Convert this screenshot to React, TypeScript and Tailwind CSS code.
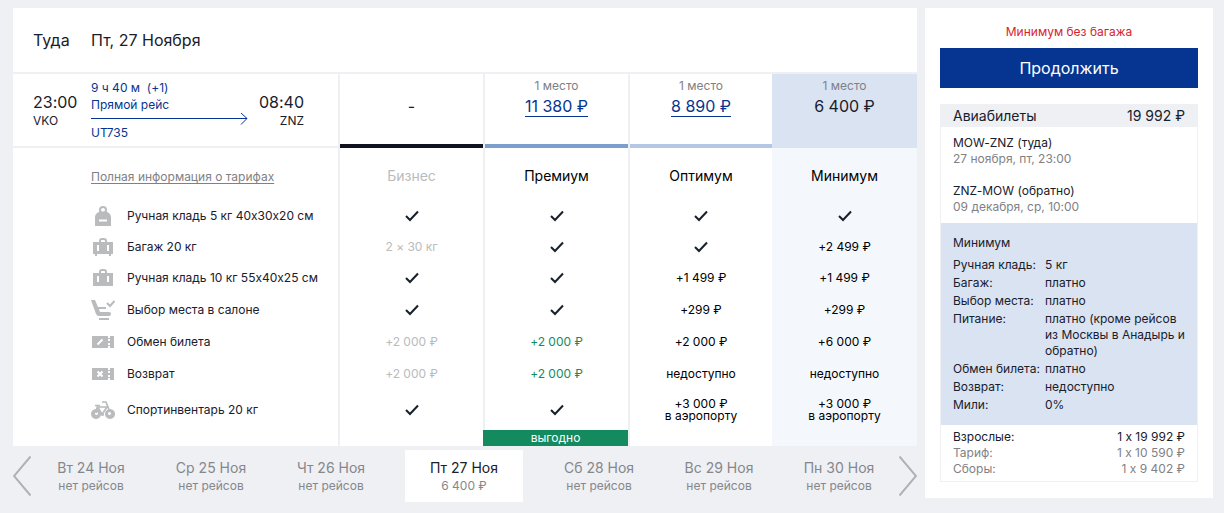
import clsx from "clsx";
import type { ReactNode } from "react";

type Cell = { text: string; tone?: "muted" | "good" } | "check";

const CHECK: Cell = "check";

const tariffs = [
  { name: "Бизнес", seats: "", price: "", bar: "border-[#10131f]" },
  { name: "Премиум", seats: "1 место", price: "11 380 ₽", bar: "border-[#7c9fcd]" },
  { name: "Оптимум", seats: "1 место", price: "8 890 ₽", bar: "border-[#b4c7e5]" },
  { name: "Минимум", seats: "1 место", price: "6 400 ₽", bar: "border-[#dae3f2]", selected: true },
];

const rows: { label: string; icon: ReactNode; height: string; cells: Cell[] }[] = [
  {
    label: "Ручная кладь 5 кг 40x30x20 см",
    icon: <BackpackIcon />,
    height: "h-[31px]",
    cells: [CHECK, CHECK, CHECK, CHECK],
  },
  {
    label: "Багаж 20 кг",
    icon: <SuitcaseIcon feet />,
    height: "h-[31px]",
    cells: [{ text: "2 × 30 кг", tone: "muted" }, CHECK, CHECK, { text: "+2 499 ₽" }],
  },
  {
    label: "Ручная кладь 10 кг 55x40x25 см",
    icon: <SuitcaseIcon />,
    height: "h-8",
    cells: [CHECK, CHECK, { text: "+1 499 ₽" }, { text: "+1 499 ₽" }],
  },
  {
    label: "Выбор места в салоне",
    icon: <SeatIcon />,
    height: "h-8",
    cells: [CHECK, CHECK, { text: "+299 ₽" }, { text: "+299 ₽" }],
  },
  {
    label: "Обмен билета",
    icon: <TicketIcon mark="edit" />,
    height: "h-8",
    cells: [
      { text: "+2 000 ₽", tone: "muted" },
      { text: "+2 000 ₽", tone: "good" },
      { text: "+2 000 ₽" },
      { text: "+6 000 ₽" },
    ],
  },
  {
    label: "Возврат",
    icon: <TicketIcon mark="cross" />,
    height: "h-8",
    cells: [
      { text: "+2 000 ₽", tone: "muted" },
      { text: "+2 000 ₽", tone: "good" },
      { text: "недоступно" },
      { text: "недоступно" },
    ],
  },
  {
    label: "Спортинвентарь 20 кг",
    icon: <BikeIcon />,
    height: "h-10",
    cells: [CHECK, CHECK, { text: "+3 000 ₽\nв аэропорту" }, { text: "+3 000 ₽\nв аэропорту" }],
  },
];

const days = [
  { date: "Вт 24 Ноя", info: "нет рейсов" },
  { date: "Ср 25 Ноя", info: "нет рейсов" },
  { date: "Чт 26 Ноя", info: "нет рейсов" },
  { date: "Пт 27 Ноя", info: "6 400 ₽", active: true },
  { date: "Сб 28 Ноя", info: "нет рейсов" },
  { date: "Вс 29 Ноя", info: "нет рейсов" },
  { date: "Пн 30 Ноя", info: "нет рейсов" },
];

const conditions = [
  ["Ручная кладь:", "5 кг"],
  ["Багаж:", "платно"],
  ["Выбор места:", "платно"],
  ["Питание:", "платно (кроме рейсов из Москвы в Анадырь и обратно)"],
  ["Обмен билета:", "платно"],
  ["Возврат:", "недоступно"],
  ["Мили:", "0%"],
];

function BackpackIcon() {
  return (
    <svg width="24" height="20" viewBox="0 0 24 20" aria-hidden="true">
      <circle cx="12" cy="4" r="3" fill="none" stroke="#b9bbbd" strokeWidth="2" />
      <path
        fill="#b9bbbd"
        fillRule="evenodd"
        d="M4 20v-8.500C4 8 7 5.500 10 5.500h4c3 0 6 2.500 6 6V20zM8 13.500v2h8v-2z"
      />
    </svg>
  );
}

function SuitcaseIcon({ feet = false }: { feet?: boolean }) {
  return (
    <svg width="24" height="18" viewBox="0 0 24 18" aria-hidden="true">
      <path d="M9 5V3q0-2 2-2h2q2 0 2 2v2" fill="none" stroke="#b9bbbd" strokeWidth="2" />
      <path
        fill="#b9bbbd"
        fillRule="evenodd"
        d="M2 4h20v12H2zM6 7v6h2V7zM16 7v6h2V7z"
      />
      {feet ? (
        <path fill="#b9bbbd" d="M4 16h2v2H4zM18 16h2v2h-2z" />
      ) : (
        <path fill="#b9bbbd" d="M2 16h20v1H2z" />
      )}
    </svg>
  );
}

function SeatIcon() {
  return (
    <svg width="24" height="20" viewBox="0 0 24 20" aria-hidden="true">
      <path fill="#b9bbbd" d="M0 0h4l3 7h8v2H8l1 3h9q2 0 2 2t-2 2H8q-2 0-3-2z" />
      <path fill="#b9bbbd" d="M8 18h10v2H8z" />
      <path d="M16 3l3 3 4.500-5" fill="none" stroke="#b9bbbd" strokeWidth="2" />
    </svg>
  );
}

function TicketIcon({ mark }: { mark: "edit" | "cross" }) {
  return (
    <svg width="24" height="12" viewBox="0 0 24 12" aria-hidden="true">
      <path
        fill="#b9bbbd"
        fillRule="evenodd"
        d="M1 0h16v2h2V0h4v12h-4v-2h-2v2H1zM17 3v2h2V3zM17 7v2h2V7z"
      />
      {mark === "edit" ? (
        <path d="M6.500 8.500l5-5" stroke="#fff" strokeWidth="2" />
      ) : (
        <path d="M6.500 3.500l5 5M11.500 3.500l-5 5" stroke="#fff" strokeWidth="2" />
      )}
    </svg>
  );
}

function BikeIcon() {
  return (
    <svg width="24" height="18" viewBox="0 0 24 18" aria-hidden="true">
      <path
        fill="#b9bbbd"
        fillRule="evenodd"
        d="M5 8a5 5 0 1 0 .01 0zM5.500 11a1.500 1.500 0 1 1-.01 0zM19 8a5 5 0 1 0 .01 0zM18.500 11a1.500 1.500 0 1 1-.01 0z"
      />
      <path
        d="M4 4.500h5M6.500 5l-1.500 7M6.500 5.500l4.500 8 5-7.500H8M11 1h4l4 10"
        fill="none"
        stroke="#b9bbbd"
        strokeWidth="1.700"
        strokeLinejoin="round"
      />
      <circle cx="11.500" cy="13.500" r="1.500" fill="#b9bbbd" />
    </svg>
  );
}

function CheckIcon() {
  return (
    <svg width="14" height="12" viewBox="0 0 14 12" role="img" aria-label="включено" className="mx-auto">
      <path d="M1 6l4 4 8-8.500" fill="none" stroke="#18202c" strokeWidth="2" />
    </svg>
  );
}

function Chevron({ flip = false }: { flip?: boolean }) {
  return (
    <svg width="18" height="40" viewBox="0 0 18 40" aria-hidden="true" className={clsx(flip && "rotate-180")}>
      <path d="M17.500 .5L1 20l16.500 19.500" fill="none" stroke="#adb0b4" strokeWidth="2" />
    </svg>
  );
}

function FlightCell() {
  return (
    <div className="flex h-[74px] items-start border-b-2 border-[#eff0f4] pr-[34px] pl-5 text-[#18202c]">
      <div className="w-[58px] pt-[18px]">
        <p className="text-base leading-5">23:00</p>
        <p className="text-xs leading-[18px]">VKO</p>
      </div>
      <div className="w-[157px] pt-[6px] text-xs text-[#063591]">
        <p className="leading-4">9 ч 40 м&nbsp; (+1)</p>
        <p className="leading-[18px]">Прямой рейс</p>
        <svg viewBox="0 0 157 12" width="157" height="12" aria-hidden="true" className="-mt-px">
          <path d="M0 5.500h156M150 0l6 5.500-6 6" fill="none" stroke="#063591" />
        </svg>
        <p className="leading-4">UT735</p>
      </div>
      <div className="flex-1 pt-[18px] text-right">
        <p className="text-base leading-5">08:40</p>
        <p className="text-xs leading-[18px]">ZNZ</p>
      </div>
    </div>
  );
}

function TariffTable() {
  return (
    <table className="w-full table-fixed border-separate border-spacing-0 bg-white">
      <colgroup>
        <col />
        <col className="w-[145px]" />
        <col className="w-[145px]" />
        <col className="w-[144px]" />
        <col className="w-[145px]" />
      </colgroup>
      <thead>
        <tr>
          <td className="p-0">
            <FlightCell />
          </td>
          {tariffs.map((t) => (
            <td
              key={t.name}
              className={clsx("p-0 text-center", t.selected ? "bg-[#dae3f2]" : "border-l-2 border-[#eff0f4]")}
            >
              <div className={clsx("h-[74px] border-b-4 pt-1", t.bar)}>
                {t.price ? (
                  <>
                    <p className="text-xs leading-4 text-[#7f8185]">{t.seats}</p>
                    <button
                      type="button"
                      className={clsx(
                        "border-b text-base leading-5",
                        t.selected ? "border-transparent text-[#18202c]" : "border-[#063591] text-[#063591]"
                      )}
                    >
                      {t.price}
                    </button>
                  </>
                ) : (
                  <p className="pt-4 text-base leading-6 text-[#18202c]">-</p>
                )}
              </div>
            </td>
          ))}
        </tr>
        <tr className="h-[52px] text-sm">
          <td className="pt-1 pl-[78px]">
            <a href="#tariffs" className="text-xs text-[#7f8185] underline underline-offset-2">
              Полная информация о тарифах
            </a>
          </td>
          {tariffs.map((t) => (
            <th
              key={t.name}
              scope="col"
              className={clsx(
                "p-0 pt-1 text-center font-normal",
                t.price ? "text-black" : "text-[#b9bbbd]",
                t.selected ? "bg-[#f4f7fc]" : "border-l-2 border-[#eff0f4]"
              )}
            >
              {t.name}
            </th>
          ))}
        </tr>
      </thead>
      <tbody>
        {rows.map((row) => (
          <tr key={row.label} className={clsx(row.height, "text-xs leading-3")}>
            <th scope="row" className="p-0 pl-[78px] text-left font-normal text-[#18202c]">
              <span className="flex items-center gap-3">
                {row.icon}
                {row.label}
              </span>
            </th>
            {row.cells.map((cell, i) => (
              <td
                key={tariffs[i].name}
                className={clsx(
                  "p-0 text-center whitespace-pre-line",
                  tariffs[i].selected ? "bg-[#f4f7fc]" : "border-l-2 border-[#eff0f4]",
                  cell === "check" || !cell.tone
                    ? "text-black"
                    : cell.tone === "muted"
                      ? "text-[#b9bbbd]"
                      : "text-[#148a5f]"
                )}
              >
                {cell === "check" ? <CheckIcon /> : cell.text}
              </td>
            ))}
          </tr>
        ))}
      </tbody>
      <tfoot>
        <tr className="h-4 text-xs leading-4">
          <td className="p-0" />
          <td className="border-l-2 border-[#eff0f4] p-0" />
          <td className="bg-[#148a5f] p-0 text-center text-white">выгодно</td>
          <td className="border-l-2 border-[#eff0f4] p-0" />
          <td className="bg-[#f4f7fc] p-0" />
        </tr>
      </tfoot>
    </table>
  );
}

function DayPicker() {
  return (
    <nav aria-label="Даты" className="flex items-center pt-1">
      <button type="button" aria-label="Предыдущие дни">
        <Chevron />
      </button>
      {days.map((d) => (
        <button
          key={d.date}
          type="button"
          className={clsx(
            "h-[52px] pt-px text-center",
            d.active ? "mr-4 ml-[14px] w-[118px] bg-white" : "flex-1 text-[#85878c]"
          )}
        >
          <span className={clsx("block text-sm leading-[18px]", d.active && "text-[#18202c]")}>{d.date}</span>
          <span className="block text-xs leading-[18px] text-[#85878c]">{d.info}</span>
        </button>
      ))}
      <button type="button" aria-label="Следующие дни">
        <Chevron flip />
      </button>
    </nav>
  );
}

function Summary() {
  return (
    <aside className="w-[288px] shrink-0 bg-white px-[15px] py-4 text-xs leading-4 text-[#18202c]">
      <p className="text-center text-[#d8232f]">Минимум без багажа</p>
      <button type="button" className="mt-2 h-10 w-full bg-[#063591] text-base text-white">
        Продолжить
      </button>
      <div className="mt-4 border border-[#eff0f4]">
        <div className="flex justify-between bg-[#eff0f4] px-3 text-sm leading-[22px]">
          <h2>Авиабилеты</h2>
          <span>19 992 ₽</span>
        </div>
        <div className="space-y-4 px-3 py-2">
          <div>
            <p>MOW-ZNZ (туда)</p>
            <p className="text-[#7f8185]">27 ноября, пт, 23:00</p>
          </div>
          <div>
            <p>ZNZ-MOW (обратно)</p>
            <p className="text-[#7f8185]">09 декабря, ср, 10:00</p>
          </div>
        </div>
        <div className="bg-[#dae3f2] p-3">
          <h3>Минимум</h3>
          <dl className="mt-[6px] grid grid-cols-[92px_1fr] gap-y-[2px]">
            {conditions.map(([term, value]) => (
              <div key={term} className="contents">
                <dt className="whitespace-nowrap">{term}</dt>
                <dd>{value}</dd>
              </div>
            ))}
          </dl>
        </div>
        <div className="px-3 py-1">
          <p className="flex justify-between">
            <span>Взрослые:</span>
            <span>1 x 19 992 ₽</span>
          </p>
          <p className="flex justify-between text-[#7f8185]">
            <span>Тариф:</span>
            <span>1 x 10 590 ₽</span>
          </p>
          <p className="flex justify-between text-[#7f8185]">
            <span>Сборы:</span>
            <span>1 x 9 402 ₽</span>
          </p>
        </div>
      </div>
    </aside>
  );
}

export default function App() {
  return (
    // calt off, otherwise Inter turns the "x" in 40x30x20 into a multiplication sign
    <div className="flex min-h-screen items-start gap-2 bg-[#eff0f4] py-2 pr-[11px] pl-[13px] font-['Inter',sans-serif] [font-feature-settings:'calt'_0]">
      <main className="min-w-0 flex-1">
        <header className="flex h-[66px] items-center border-b-2 border-[#eff0f4] bg-white pl-5 text-base text-[#18202c]">
          <span className="w-[58px]">Туда</span>
          <h1>Пт, 27 Ноября</h1>
        </header>
        <TariffTable />
        <DayPicker />
      </main>
      <Summary />
    </div>
  );
}
